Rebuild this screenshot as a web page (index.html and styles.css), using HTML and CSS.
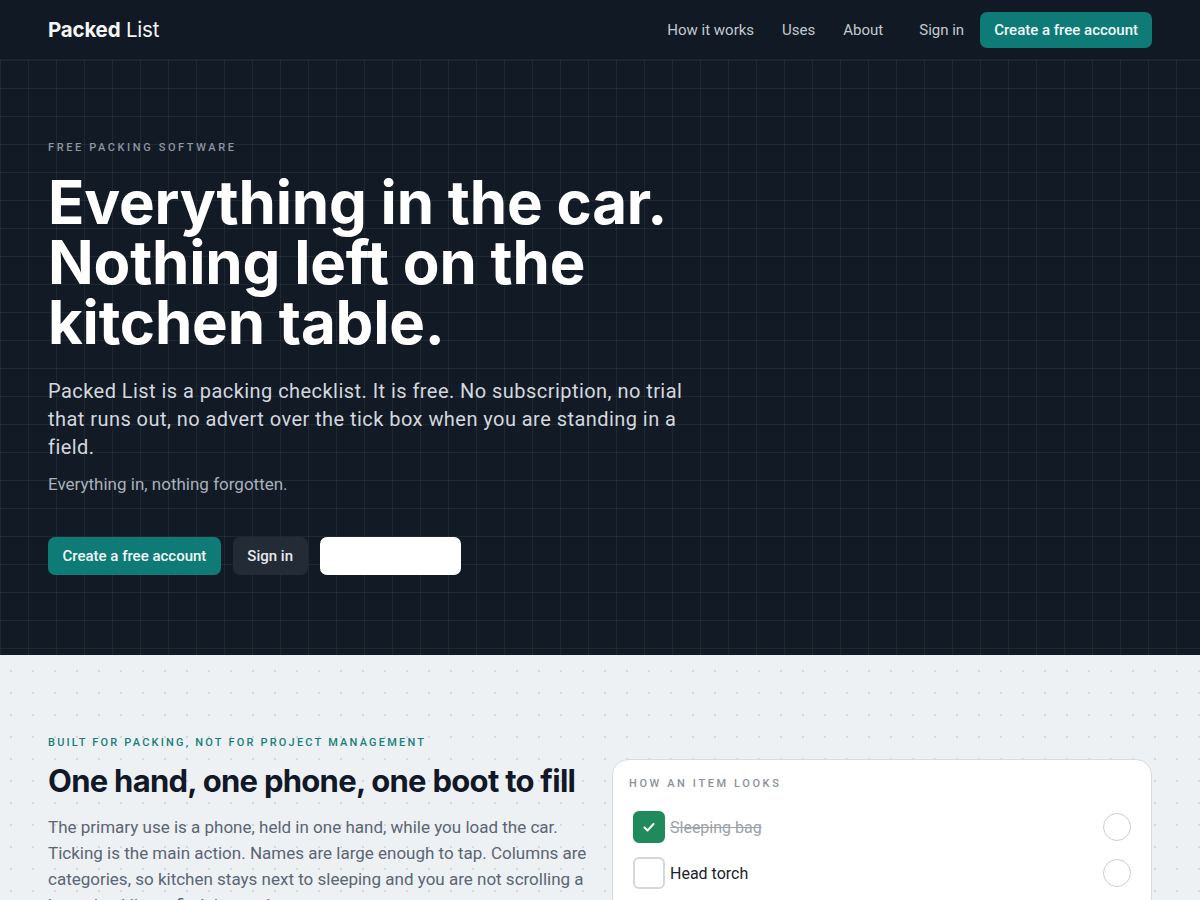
FILE: index.html
```html
<!DOCTYPE html>
<html lang="en">
<head>
<meta charset="utf-8">
<title>Packed List</title>
<link rel="stylesheet" href="styles.css">
</head>
<body>
<header class="topbar">
  <a class="logo" href="#"><b>Packed</b> List</a>
  <nav class="nav">
    <div class="nav-links">
      <a href="#">How it works</a>
      <a href="#">Uses</a>
      <a href="#">About</a>
    </div>
    <div class="nav-actions">
      <a class="nav-signin" href="#">Sign in</a>
      <a class="btn btn-primary btn-nav" href="#">Create a free account</a>
    </div>
  </nav>
</header>

<section class="hero">
  <p class="eyebrow">Free packing software</p>
  <h1 class="hero-title">Everything in the car.<br>Nothing left on the<br>kitchen table.</h1>
  <p class="hero-lead">Packed List is a packing checklist. It is free. No subscription, no trial that runs out, no advert over the tick box when you are standing in a field.</p>
  <p class="hero-tag">Everything in, nothing forgotten.</p>
  <div class="hero-actions">
    <a class="btn btn-primary" href="#">Create a free account</a>
    <a class="btn btn-ghost" href="#">Sign in</a>
    <span class="btn btn-blank"></span>
  </div>
</section>

<section class="features">
  <div class="features-grid">
    <div class="features-copy">
      <p class="eyebrow eyebrow-teal">Built for packing, not for project management</p>
      <h2 class="features-title">One hand, one phone, one boot to fill</h2>
      <p class="features-text">The primary use is a phone, held in one hand, while you load the car. Ticking is the main action. Names are large enough to tap. Columns are categories, so kitchen stays next to sleeping and you are not scrolling a long checklist to find the torch.</p>
    </div>
    <div class="card">
      <p class="card-label">How an item looks</p>
      <div class="item">
        <span class="check check-on">
          <svg viewBox="0 0 16 16" width="16" height="16"><path d="M3.5 8.5l3 3 6-6.5" fill="none" stroke="#fff" stroke-width="2" stroke-linecap="round" stroke-linejoin="round"/></svg>
        </span>
        <span class="item-name item-done">Sleeping bag</span>
        <span class="dot-ring"></span>
      </div>
      <div class="item">
        <span class="check"></span>
        <span class="item-name">Head torch</span>
        <span class="dot-ring"></span>
      </div>
      <div class="item-drop"></div>
    </div>
  </div>
</section>
</body>
</html>
```

FILE: styles.css
```css
* { box-sizing: border-box; }
html, body { margin: 0; padding: 0; }
body {
  font-family: Roboto, "Liberation Sans", sans-serif;
  background: #edf1f4;
  color: #111827;
}
a { text-decoration: none; color: inherit; }
p { margin: 0; }

.topbar {
  height: 60px;
  background: #111a24;
  border-bottom: 1px solid #1c2531;
  display: flex;
  align-items: center;
  justify-content: space-between;
  padding: 0 48px;
}
.logo {
  font-family: Inter, Roboto, sans-serif;
  font-size: 20.5px;
  color: #f4f6f8;
  font-weight: 400;
  letter-spacing: -0.2px;
}
.logo b { font-weight: 700; }
.nav { display: flex; align-items: center; }
.nav-links { display: flex; gap: 28px; }
.nav-links a, .nav-signin {
  font-size: 15px;
  color: #c3c9d1;
}
.nav-actions {
  display: flex;
  align-items: center;
  gap: 16px;
  margin-left: 36px;
}

.btn {
  display: inline-flex;
  align-items: center;
  justify-content: center;
  height: 38px;
  padding: 0 14.5px;
  border-radius: 7px;
  font-size: 15px;
  font-weight: 500;
}
.btn-primary { background: #0f7b77; color: #f2f7f7; }
.btn-nav { height: 36px; padding: 0 14px; }
.btn-ghost { background: #222b36; color: #e6e9ed; }
.btn-blank { background: #ffffff; width: 141px; }

.hero {
  background-color: #121a25;
  background-image:
    linear-gradient(to right, rgba(255,255,255,0.055) 1px, transparent 1px),
    linear-gradient(to bottom, rgba(255,255,255,0.055) 1px, transparent 1px);
  background-size: 28px 28px;
  padding: 80px 48px 80px;
}
.eyebrow {
  font-size: 11px;
  line-height: 16px;
  letter-spacing: 2.6px;
  text-transform: uppercase;
  color: #8c95a1;
  font-weight: 500;
}
.hero-title {
  margin: 16px 0 0;
  font-family: Inter, Roboto, sans-serif;
  font-weight: 700;
  font-size: 60px;
  line-height: 60px;
  letter-spacing: -0.2px;
  color: #ffffff;
}
.hero-lead {
  margin-top: 25px;
  max-width: 650px;
  font-size: 20px;
  line-height: 28px;
  letter-spacing: 0.45px;
  color: #d3d8de;
}
.hero-tag {
  margin-top: 11px;
  font-size: 17px;
  line-height: 24px;
  color: #a9b1bb;
}
.hero-actions {
  margin-top: 41px;
  display: flex;
  gap: 12px;
}

.features {
  background-color: #edf1f4;
  background-image: radial-gradient(circle, #d3d8de 1px, transparent 1.5px);
  background-size: 22px 22px;
  background-position: 0 5px;
  padding: 80px 48px 40px;
}
.features-grid {
  display: grid;
  grid-template-columns: 1fr 1fr;
  gap: 24px;
  align-items: start;
}
.eyebrow-teal {
  color: #15807a;
  letter-spacing: 2.2px;
}
.features-title {
  margin: 10px 0 0;
  font-family: Inter, Roboto, sans-serif;
  font-size: 31px;
  line-height: 40px;
  font-weight: 700;
  letter-spacing: -0.72px;
  white-space: nowrap;
  color: #111827;
}
.features-text {
  margin-top: 13px;
  font-size: 17px;
  line-height: 26px;
  color: #5b6573;
}

.card {
  margin-top: 24px;
  background: #ffffff;
  border: 1px solid #d6dbe1;
  border-radius: 16px;
  padding: 16px 16px 20px;
}
.card-label {
  font-size: 11px;
  line-height: 16px;
  letter-spacing: 2.6px;
  text-transform: uppercase;
  color: #8b9199;
  font-weight: 500;
}
.item {
  display: flex;
  align-items: center;
  gap: 5px;
  height: 46px;
  padding: 0 4px;
}
.item:first-of-type { margin-top: 12px; }
.check {
  width: 32px;
  height: 32px;
  border-radius: 6px;
  border: 2px solid #d4d7dc;
  display: inline-flex;
  align-items: center;
  justify-content: center;
  flex: none;
}
.check-on { background: #1f8a5c; border-color: #1f8a5c; }
.item-name {
  flex: 1;
  font-size: 16px;
  color: #1b222c;
}
.item-done {
  color: #9ca2aa;
  text-decoration: line-through;
}
.dot-ring {
  width: 28px;
  height: 28px;
  border-radius: 50%;
  border: 1px solid #c9cdd3;
  flex: none;
}
.item-drop {
  margin-top: 8px;
  height: 40px;
  border-top: 2px dashed #e3e6ea;
}
```
